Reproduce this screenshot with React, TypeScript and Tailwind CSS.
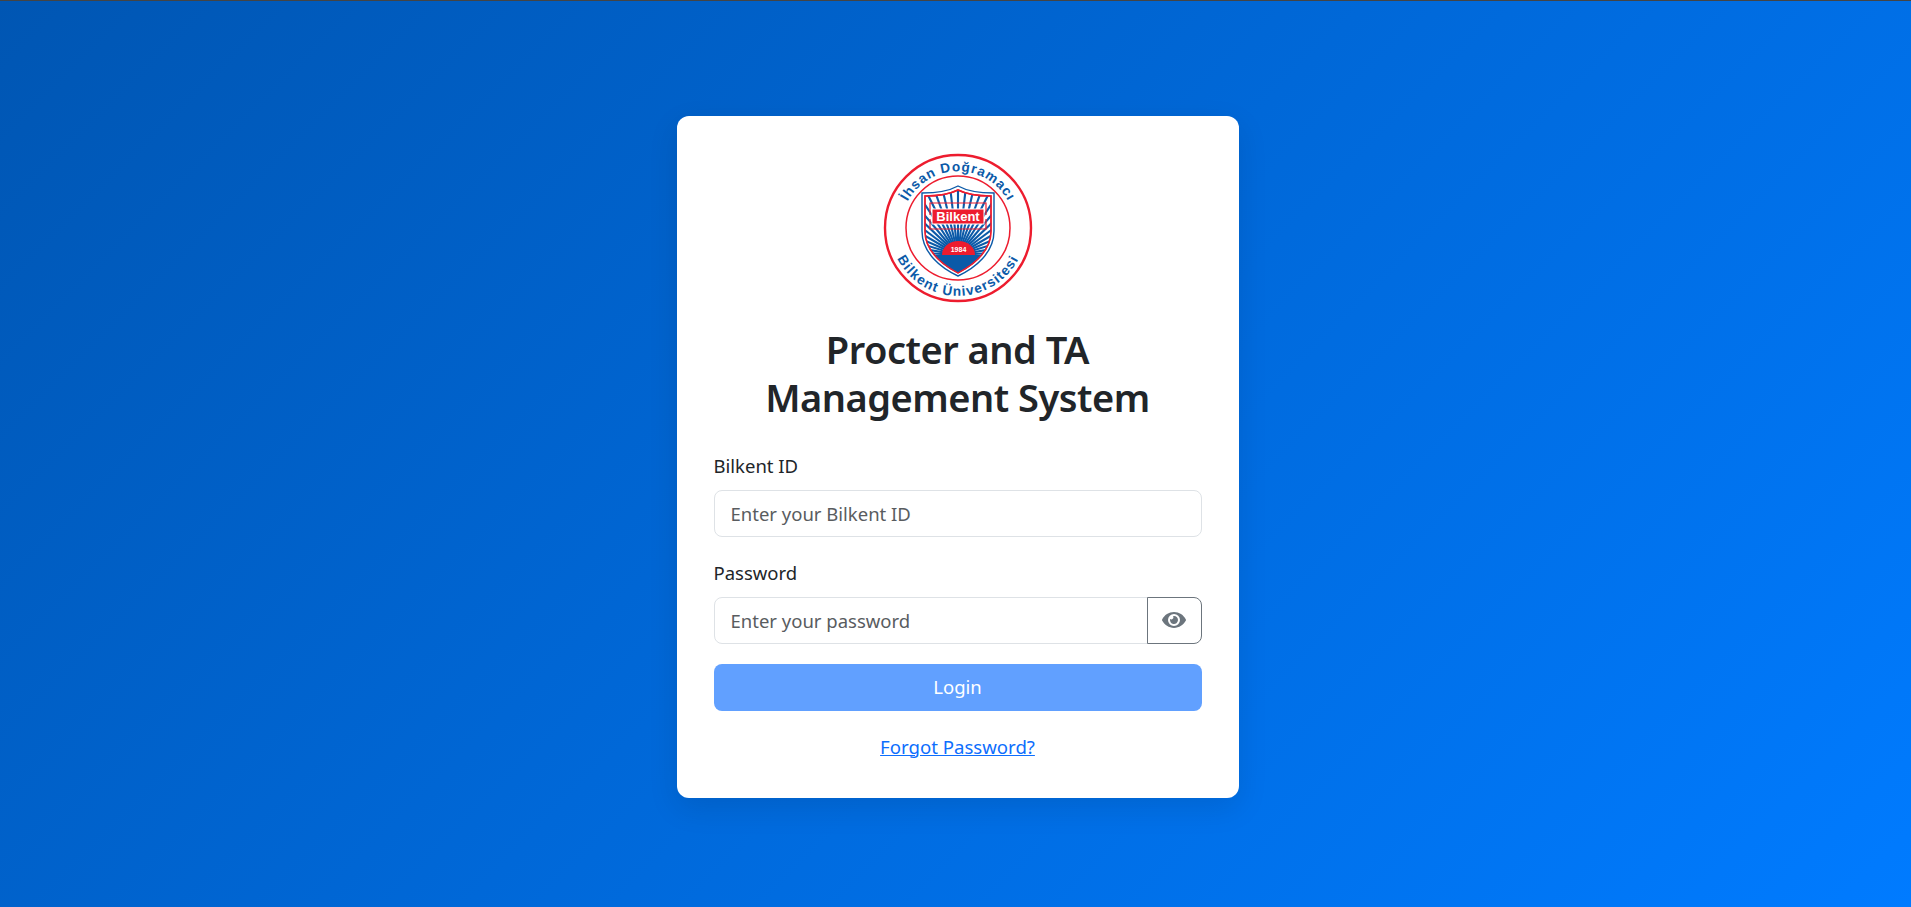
import React from 'react';
import { FaEye } from 'react-icons/fa';

const rays = Array.from({ length: 27 }, (_, i) => -86.45 + i * 6.65);

const shieldOuter = 'M39 40 C52 40 66 38 75 33 C84 38 98 40 111 40 L111 78 C111 100 92 115 75 123 C58 115 39 100 39 78 Z';
const shieldInner = 'M42 43 C54 43 67 41 75 37 C83 41 96 43 108 43 L108 78 C108 98 90 112 75 120 C60 112 42 98 42 78 Z';

const BilkentLogo: React.FC = () => (
  <svg viewBox="0 0 150 150" className="w-[150px] h-[150px] block">
    <defs>
      <path id="arcTop" d="M 23 52 A 57 57 0 0 1 127 52" fill="none" />
      <path id="arcBottom" d="M 12 100.5 A 68 68 0 0 0 138 100.5" fill="none" />
      <clipPath id="shieldClip">
        <path d={shieldInner} />
      </clipPath>
    </defs>
    <circle cx="75" cy="75" r="73" fill="#fff" stroke="#ed1c2e" strokeWidth="2.4" />
    <circle cx="75" cy="75" r="52" fill="#fff" stroke="#ed1c2e" strokeWidth="1.5" />
    <text fill="#0b5aa8" fontFamily="'Liberation Sans', sans-serif" fontWeight="700" fontSize="13.6" letterSpacing="0.9" textAnchor="middle">
      <textPath href="#arcTop" startOffset="50%">İhsan Doğramacı</textPath>
    </text>
    <text fill="#0b5aa8" fontFamily="'Liberation Sans', sans-serif" fontWeight="700" fontSize="13.6" letterSpacing="1.2" textAnchor="middle">
      <textPath href="#arcBottom" startOffset="50%">Bilkent Üniversitesi</textPath>
    </text>
    <path d={shieldOuter} fill="#fff" stroke="#0b5aa8" strokeWidth="1.4" />
    <path d={shieldInner} fill="#fff" stroke="#ed1c2e" strokeWidth="1.4" />
    <g clipPath="url(#shieldClip)">
      <g stroke="#0b5aa8" strokeWidth="2.1">
        {rays.map((deg) => (
          <line
            key={deg}
            x1="75"
            y1="102"
            x2={75 + 75 * Math.sin((deg * Math.PI) / 180)}
            y2={102 - 75 * Math.cos((deg * Math.PI) / 180)}
          />
        ))}
      </g>
      <path d="M36 102 H114 V125 H36 Z" fill="#0b5aa8" />
    </g>
    <path d={shieldInner} fill="none" stroke="#ed1c2e" strokeWidth="1.4" />
    <path d="M59 102 A16.5 14 0 0 1 92 102 Z" fill="#ed1c2e" />
    <text x="75.5" y="99" textAnchor="middle" fill="#fff" fontFamily="'Liberation Sans', sans-serif" fontWeight="700" fontSize="7">1984</text>
    <path d="M47 62 V50 H103 V62 M47 66 V76 H103 V66" fill="none" stroke="#ed1c2e" strokeWidth="1.2" />
    <rect x="49" y="56" width="52" height="15" fill="#ed1c2e" stroke="#fff" strokeWidth="1" />
    <text x="75" y="67.5" textAnchor="middle" fill="#fff" fontFamily="'Liberation Sans', sans-serif" fontWeight="700" fontSize="13">Bilkent</text>
  </svg>
);

export default function App() {
  return (
    <div className="min-h-screen border-t border-[#444] bg-[linear-gradient(135deg,#0056b3,#007bff)] flex items-center justify-center pt-[5px] pl-[4px] font-['Noto_Sans',sans-serif]">
      <div className="w-[562px] bg-white rounded-xl shadow-[0_10px_30px_rgba(0,0,0,0.1)] px-[37px] pt-[37px] pb-[38px]">
        <div className="flex justify-center">
          <BilkentLogo />
        </div>
        <h1 className="mt-[22px] text-center text-[38px] leading-[48px] font-[560] tracking-[-0.5px] text-[#212529]">
          Procter and TA<br />Management System
        </h1>
        <form className="mt-[31px]" onSubmit={(e) => e.preventDefault()}>
          <label className="block text-[18.5px] leading-[27px] text-[#212529] mb-[11px]">Bilkent ID</label>
          <input
            type="text"
            placeholder="Enter your Bilkent ID"
            className="block w-full h-[47px] px-[16px] text-[18.5px] border border-[#dee2e6] rounded-lg bg-white placeholder:text-[#595c5f]"
          />
          <label className="block text-[18.5px] leading-[27px] text-[#212529] mt-[22px] mb-[11px]">Password</label>
          <div className="flex">
            <input
              type="password"
              placeholder="Enter your password"
              className="flex-1 min-w-0 h-[47px] px-[16px] text-[18.5px] border border-[#dee2e6] rounded-l-lg bg-white placeholder:text-[#595c5f]"
            />
            <button type="button" className="w-[55px] h-[47px] -ml-px flex items-center justify-center border border-[#6c757d] rounded-r-lg text-[#6c757d]">
              <FaEye className="w-[24px] h-[24px]" />
            </button>
          </div>
          <button type="submit" className="block w-full h-[47px] mt-[20px] rounded-lg bg-[#61a0ff] text-white text-[18.5px]">
            Login
          </button>
        </form>
        <div className="mt-[22px] text-center text-[18.6px] leading-[27px]">
          <a href="#" className="text-[#0d6efd] underline">Forgot Password?</a>
        </div>
      </div>
    </div>
  );
}
